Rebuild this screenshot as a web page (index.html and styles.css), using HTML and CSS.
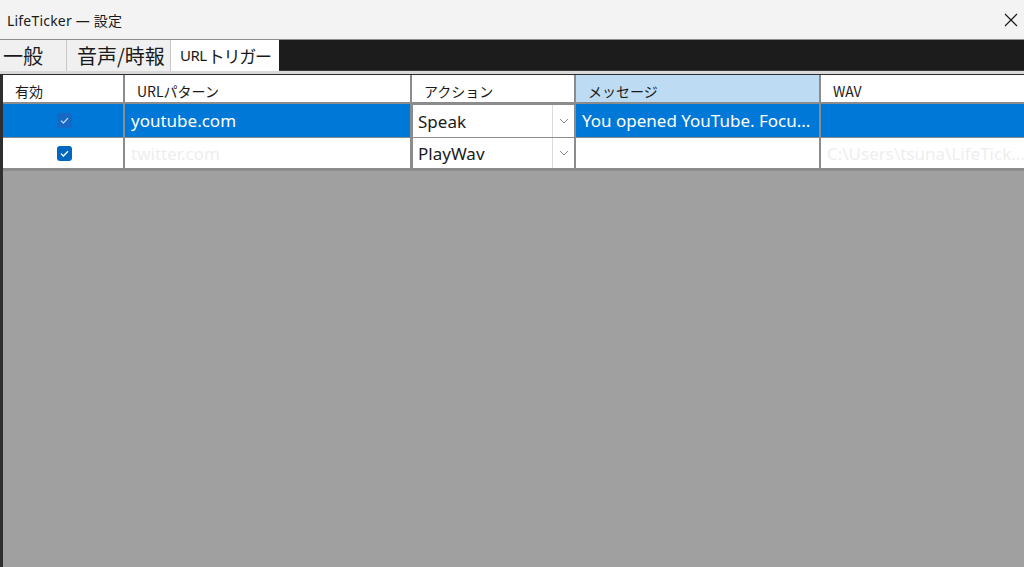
FILE: index.html
```html
<!DOCTYPE html>
<html lang="ja">
<head>
<meta charset="utf-8">
<title>LifeTicker — 設定</title>
<link rel="stylesheet" href="styles.css">
</head>
<body>
<div class="window">
  <div class="titlebar">
    <span class="title">LifeTicker — 設定</span>
    <span class="close">
      <svg width="14" height="14" viewBox="0 0 14 14"><path d="M1 1 L13 13 M13 1 L1 13" stroke="#1a1a1a" stroke-width="1.2" fill="none"/></svg>
    </span>
  </div>
  <div class="tabstrip">
    <div class="tab t1">一般</div>
    <div class="tab t2">音声/時報</div>
    <div class="tab t3 active"><span class="latin">URL</span><span class="kana">トリガー</span></div>
  </div>
  <div class="workspace">
    <div class="grid">
      <div class="cell head">有効</div>
      <div class="cell head">URLパターン</div>
      <div class="cell head">アクション</div>
      <div class="cell head sorted">メッセージ</div>
      <div class="cell head last">WAV</div>

      <div class="cell sel center"><span class="check dim"><svg width="9" height="7" viewBox="0 0 9 7"><path d="M1 3.6 L3.4 6 L8 1.2" stroke="#cfe3f7" stroke-width="1.2" fill="none"/></svg></span></div>
      <div class="cell sel">youtube.com</div>
      <div class="cell combo"><span class="ctext">Speak</span><span class="arrow"><svg width="10" height="6" viewBox="0 0 10 6"><path d="M1 1 L5 5 L9 1" stroke="#8a8a8a" stroke-width="1" fill="none"/></svg></span></div>
      <div class="cell sel">You opened YouTube. Focu...</div>
      <div class="cell sel last"></div>

      <div class="cell row2 center"><span class="check"><svg width="9" height="7" viewBox="0 0 9 7"><path d="M1 3.6 L3.4 6 L8 1.2" stroke="#ffffff" stroke-width="1.3" fill="none"/></svg></span></div>
      <div class="cell row2 faint">twitter.com</div>
      <div class="cell combo row2c"><span class="ctext">PlayWav</span><span class="arrow"><svg width="10" height="6" viewBox="0 0 10 6"><path d="M1 1 L5 5 L9 1" stroke="#8a8a8a" stroke-width="1" fill="none"/></svg></span></div>
      <div class="cell row2"></div>
      <div class="cell row2 faint last">C:\Users\tsuna\LifeTick...</div>
    </div>
  </div>
</div>
</body>
</html>
```
FILE: styles.css
```css
html, body {
  margin: 0;
  padding: 0;
  width: 1024px;
  height: 567px;
  overflow: hidden;
  font-family: "Noto Sans", "Noto Sans CJK JP", sans-serif;
}
.window {
  display: flex;
  flex-direction: column;
  height: 567px;
  background: #a0a0a0;
}
.titlebar {
  height: 40px;
  background: #f3f3f3;
  display: flex;
  align-items: center;
  justify-content: space-between;
  padding: 0 6px 0 7px;
  border-bottom: 1px solid #8c8c8c;
  box-sizing: border-box;
  flex: none;
}
.title {
  font-size: 14px;
  color: #1a1a1a;
  letter-spacing: 0.2px;
}
.close {
  display: flex;
  width: 14px;
  height: 14px;
}
.tabstrip {
  height: 31px;
  background: #1c1c1c;
  display: flex;
  align-items: stretch;
  flex: none;
  border-bottom: 3px solid #d9d9d9;
  box-shadow: inset 0 -1px 0 #3a3a3a;
}
.tab {
  background: #f0f0f0;
  font-family: "Noto Sans CJK JP", sans-serif;
  font-size: 20px;
  color: #1a1a1a;
  display: flex;
  align-items: center;
  box-sizing: border-box;
  border-right: 1px solid #c8c8c8;
  line-height: 1;
  white-space: nowrap;
}
.t1 { width: 67px; padding-left: 3px; }
.t2 { width: 104px; padding-left: 10px; }
.t3 { width: 108px; padding-left: 9px; background: #ffffff; border-right: none; }
.latin {
  font-family: "Noto Sans", sans-serif;
  font-size: 15px;
  letter-spacing: -0.5px;
  margin-right: 1px;
}
.kana {
  font-size: 17px;
  letter-spacing: -1.2px;
}
.workspace {
  flex: 1;
  border-left: 3px solid #2e2e2e;
  border-top: 1px solid #2e2e2e;
  background: #a0a0a0;
}
.grid {
  display: grid;
  grid-template-columns: 122px 287px 164px 245px 1fr;
  grid-template-rows: 29px 34px 31px;
  border-bottom: 2px solid #8c8c8c;
}
.cell {
  box-sizing: border-box;
  border-right: 2px solid #8c8c8c;
  border-bottom: 1px solid #8c8c8c;
  font-size: 17px;
  color: #1a1a1a;
  display: flex;
  align-items: center;
  padding-left: 6px;
  white-space: nowrap;
  overflow: hidden;
  background: #ffffff;
}
.cell.last { border-right: none; }
.head {
  font-family: "Noto Sans CJK JP", sans-serif;
  font-size: 14px;
  padding-left: 12px;
  padding-top: 4px;
  border-bottom: 2px solid #8c8c8c;
}
.head.sorted { background: #bddcf4; }
.sel {
  background: #0078d7;
  color: #ffffff;
}
.center {
  justify-content: center;
  padding-left: 2px;
}
.check {
  width: 15px;
  height: 15px;
  border-radius: 3px;
  background: #0067c0;
  display: flex;
  align-items: center;
  justify-content: center;
}
.check.dim {
  background: #1768c4;
}
.faint { color: #eeeeee; }
.combo {
  padding-left: 0;
  padding-right: 0;
  justify-content: space-between;
  border: 1px solid #8c8c8c;
  border-right: 2px solid #8c8c8c;
  background: #ffffff;
}
.ctext { padding-left: 5px; }
.arrow {
  width: 22px;
  height: 100%;
  border-left: 1px solid #dadada;
  display: flex;
  align-items: center;
  justify-content: center;
  box-sizing: border-box;
}
.row2c { border-top: none; }
```
